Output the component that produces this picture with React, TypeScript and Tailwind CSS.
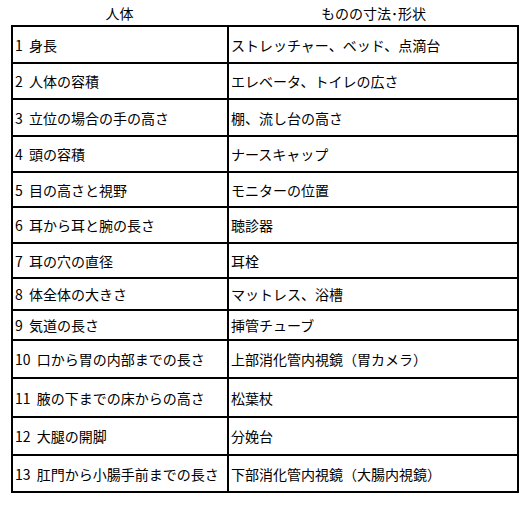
import React from 'react';

const rows: { body: string; item: string; h: string }[] = [
  { body: '1 身長', item: 'ストレッチャー、ベッド、点滴台', h: 'h-[37px]' },
  { body: '2 人体の容積', item: 'エレベータ、トイレの広さ', h: 'h-[36px]' },
  { body: '3 立位の場合の手の高さ', item: '棚、流し台の高さ', h: 'h-[37px]' },
  { body: '4 頭の容積', item: 'ナースキャップ', h: 'h-[36px]' },
  { body: '5 目の高さと視野', item: 'モニターの位置', h: 'h-[35px]' },
  { body: '6 耳から耳と腕の長さ', item: '聴診器', h: 'h-[36px]' },
  { body: '7 耳の穴の直径', item: '耳栓', h: 'h-[35px]' },
  { body: '8 体全体の大きさ', item: 'マットレス、浴槽', h: 'h-[32px]' },
  { body: '9 気道の長さ', item: '挿管チューブ', h: 'h-[30px]' },
  { body: '10 口から胃の内部までの長さ', item: '上部消化管内視鏡（胃カメラ）', h: 'h-[38px]' },
  { body: '11 腋の下までの床からの高さ', item: '松葉杖', h: 'h-[39px]' },
  { body: '12 大腿の開脚', item: '分娩台', h: 'h-[38px]' },
  { body: '13 肛門から小腸手前までの長さ', item: '下部消化管内視鏡（大腸内視鏡）', h: 'h-[35px]' },
];

export default function App() {
  return (
    <div className="w-[531px] h-[515px] bg-white text-black text-[14px] leading-none font-['Noto_Sans_CJK_JP',sans-serif]">
      <div className="pl-[11px] w-[519px]">
        <div className="grid grid-cols-[217px_1fr] h-[25px] items-center text-center">
          <div>人体</div>
          <div>ものの寸法･形状</div>
        </div>
        <div className="border-2 border-black">
          {rows.map((r, i) => (
            <div
              key={r.body}
              className={`grid grid-cols-[216px_1fr] ${r.h} ${i < rows.length - 1 ? 'border-b-2 border-black' : ''}`}
            >
              <div className="border-r-2 border-black flex items-center pl-[2px] whitespace-nowrap tabular-nums [word-spacing:3px]">
                {r.body}
              </div>
              <div className="flex items-center pl-[2px] whitespace-nowrap">{r.item}</div>
            </div>
          ))}
        </div>
      </div>
    </div>
  );
}
